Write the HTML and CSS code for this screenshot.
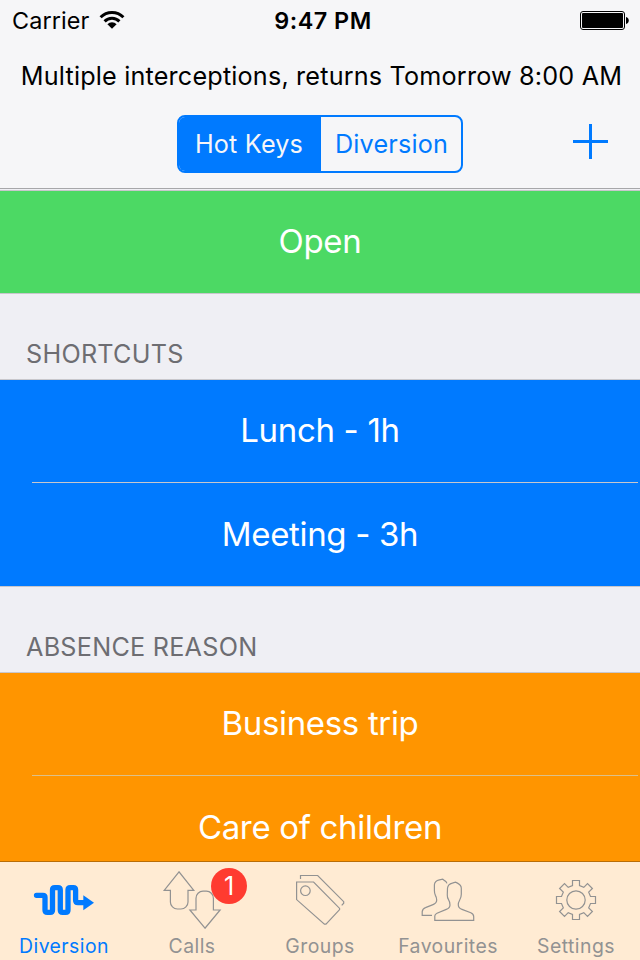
FILE: index.html
```html
<!DOCTYPE html>
<html lang="en">
<head>
    <meta charset="UTF-8">
    <title>Diversion</title>
    <link rel="stylesheet" href="styles.css">
</head>
<body>
    <div class="screen">
        <header class="top">
            <div class="status">
                <div class="status-left">
                    <span class="carrier">Carrier</span>
                    <svg class="wifi" width="26" height="20" viewBox="0 0 26 20">
                        <g fill="none" stroke="#000" stroke-width="3">
                            <path d="M1.6 7.2a16.2 16.2 0 0 1 22.8 0"/>
                            <path d="M5.6 11.4a10.4 10.4 0 0 1 14.8 0"/>
                        </g>
                        <path d="M13 18.8L8.4 14.2a6.4 6.4 0 0 1 9.2 0z"/>
                    </svg>
                </div>
                <span class="time">9:47 PM</span>
                <div class="status-right">
                    <svg width="49" height="19" viewBox="0 0 49 19">
                        <rect x=".5" y=".5" width="44" height="18" rx="2.5" fill="none" stroke="#000"/>
                        <rect x="2" y="2" width="41" height="15" rx="1"/>
                        <path d="M46 6a3.6 3.6 0 0 1 0 7z"/>
                    </svg>
                </div>
            </div>
            <div class="presence">Multiple interceptions, returns Tomorrow 8:00 AM</div>
            <div class="toolbar">
                <div class="segmented">
                    <div class="segment selected">Hot Keys</div>
                    <div class="segment">Diversion</div>
                </div>
                <svg class="add" width="35" height="35" viewBox="0 0 35 35">
                    <path d="M17.5 0v35M0 17.5h35" stroke="#007aff" stroke-width="3"/>
                </svg>
            </div>
        </header>

        <main class="list">
            <div class="group green">
                <div class="row">Open</div>
            </div>
            <h2 class="heading">SHORTCUTS</h2>
            <div class="group blue">
                <div class="row">Lunch - 1h</div>
                <div class="divider"></div>
                <div class="row">Meeting - 3h</div>
            </div>
            <h2 class="heading">ABSENCE REASON</h2>
            <div class="group orange">
                <div class="row">Business trip</div>
                <div class="divider"></div>
                <div class="row">Care of children</div>
            </div>
        </main>

        <nav class="tabs">
            <div class="tab active">
                <svg class="icon" viewBox="0 0 128 70">
                    <path d="M36.5 33.3H43q2 0 2 2V48q0 2.3 2.3 2.3h2.9q2.3 0 2.3-2.3V28q0-2.3 2.3-2.3H58q2.3 0 2.3 2.3v20q0 2.3 2.3 2.3h3.1q2.3 0 2.3-2.3V28q0-2.3 2.3-2.3h3q2.3 0 2.3 2.3v10.3q0 2.3 2.3 2.3H84" fill="none" stroke="currentColor" stroke-width="5.3" stroke-linecap="round"/>
                    <path d="M83.3 33.2L94 40.7l-10.7 7.6z" fill="currentColor"/>
                </svg>
                <span>Diversion</span>
            </div>
            <div class="tab">
                <svg class="icon line" viewBox="0 0 128 70">
                    <path d="M51 9.8L36.2 28.4h6.2V40a7 7 0 0 0 7 7H53a7 7 0 0 0 7-7V28.4h5.8z"/>
                    <path d="M77 66.2L61.9 48H68V36.2a7 7 0 0 1 7-7h3.4a7 7 0 0 1 7 7V48h6.7z"/>
                </svg>
                <span>Calls</span>
                <div class="badge">1</div>
            </div>
            <div class="tab">
                <svg class="icon line" viewBox="0 0 128 70">
                    <path d="M40.6 20h17l26 26.4v1.2L70 62.2h-1.6L40.6 37.6z"/>
                    <circle cx="49.4" cy="28.7" r="4.8"/>
                    <path d="M44.5 17v-3.5h17.2l26 26.2v1.5l-2 2.1"/>
                </svg>
                <span>Groups</span>
            </div>
            <div class="tab">
                <svg class="icon line" viewBox="0 0 128 70">
                    <path d="M50.8 58.4V54q0-1.8 2.2-2.8l9.3-3.8q3.7-1.4 3.7-4.4 0-3-1.5-5.3c-1.5-2.3-1.2-3.8-1.2-5.4l.2-6q.4-4.2 4.8-5.2l3.2-.9 2 .9q3.8 2 3.8 5.2v6c0 3-.7 4.3-1.7 6q-1.4 2.4-1.3 4.7 0 3 3.7 4.4l8.8 3.4q2.9 1.3 2.9 4v3.6z"/>
                    <path d="M48 53.4h-9.8v-3.8q.4-3 3.3-4l7.5-3q3.7-1.4 3.7-4.6 0-2.4-1.3-4.6c-1-1.8-1-3.2-1-4.8v-5.8q.3-4 5-5l3.3-.6 2.3 1.7q1.4.7 1.9 2.5"/>
                </svg>
                <span>Favourites</span>
            </div>
            <div class="tab">
                <svg class="icon line" viewBox="0 0 128 70">
                    <g transform="translate(64 38)">
                        <path d="M-3.5-19.5h7v5l4.3 1.8 3.7-3.7 4.9 4.9-3.7 3.7 1.8 4.3h5v7h-5l-1.8 4.3 3.7 3.7-4.9 4.9-3.7-3.7-4.3 1.8v5h-7v-5l-4.3-1.8-3.7 3.7-4.9-4.9 3.7-3.7-1.8-4.3h-5v-7h5l1.8-4.3-3.7-3.7 4.9-4.9 3.7 3.7 4.3-1.8z"/>
                        <circle r="9.2"/>
                    </g>
                </svg>
                <span>Settings</span>
            </div>
        </nav>
    </div>
</body>
</html>
```

FILE: styles.css
```css
* {
    box-sizing: border-box;
}
body {
    margin: 0;
    font-family: Inter, "Liberation Sans", sans-serif;
    color: #000;
}
.screen {
    display: flex;
    flex-direction: column;
    width: 640px;
    height: 960px;
    overflow: hidden;
    background-color: #efeff4;
}

/* top bar */
.top {
    flex: none;
    height: 189px;
    background-color: #f6f6f8;
    border-bottom: 1px solid #a7a7aa;
}
.status {
    display: grid;
    grid-template-columns: 1fr auto 1fr;
    align-items: center;
    height: 40px;
    padding: 0 11px 0 12px;
    font-size: 23.4px;
}
.status-left {
    display: flex;
    align-items: center;
    gap: 10px;
}
.carrier {
    letter-spacing: .1px;
}
.status-right {
    display: flex;
    justify-content: flex-end;
}
.time {
    padding-left: 5px;
    font-weight: 600;
    letter-spacing: .5px;
}
.presence {
    height: 72px;
    padding-left: 3px;
    line-height: 73px;
    font-size: 25.2px;
    letter-spacing: .18px;
    text-align: center;
    white-space: nowrap;
}
.toolbar {
    display: grid;
    grid-template-columns: 1fr 286px 1fr;
    align-items: center;
    padding: 3px 32px 0;
}
.segmented {
    display: flex;
    height: 58px;
    border: 2px solid #007aff;
    border-radius: 8px;
    overflow: hidden;
    grid-column: 2;
}
.segment {
    flex: 1;
    padding-left: 1px;
    line-height: 55px;
    text-align: center;
    font-size: 25.2px;
    letter-spacing: .18px;
    color: #007aff;
}
.selected {
    flex: none;
    width: 142px;
    padding: 0 2px 0 0;
    background-color: #007aff;
    color: #f6f6f8;
}
.add {
    justify-self: end;
    margin-bottom: 5px;
}

/* list */
.list {
    flex: 1;
    min-height: 0;
    padding-top: 1px;
    overflow: hidden;
}
.group {
    border-top: 1px solid #c8c7cc;
    border-bottom: 1px solid #c8c7cc;
    color: #fff;
}
.row {
    height: 102px;
    line-height: 101px;
    text-align: center;
    font-size: 33px;
    letter-spacing: -.33px;
}
.divider + .row {
    height: 103px;
    line-height: 103px;
}
.divider {
    height: 1px;
    margin: 0 2px 0 32px;
    background-color: #c8c7cc;
}
.green {
    background-color: #4cd964;
}
.blue {
    background-color: #007aff;
}
.orange {
    background-color: #ff9500;
}
.orange .divider {
    background-color: #dcc08a;
}
.heading {
    height: 85px;
    margin: 0;
    padding: 44px 0 0 26px;
    line-height: 32px;
    font-size: 25.2px;
    font-weight: 400;
    letter-spacing: .25px;
    color: #6d6d72;
}

/* tab bar */
.tabs {
    flex: none;
    display: flex;
    height: 99px;
    border-top: 1px solid #b96d06;
    background-color: #ffebd3;
}
.tab {
    position: relative;
    flex: 1;
    display: flex;
    flex-direction: column;
    align-items: center;
    font-size: 19.4px;
    line-height: 28px;
    letter-spacing: .45px;
    color: #929292;
}
.active {
    color: #007aff;
}
.icon {
    width: 128px;
    height: 70px;
}
.line {
    fill: none;
    stroke: #929292;
    stroke-width: 1.2;
}
.badge {
    position: absolute;
    left: 83px;
    top: 6px;
    width: 36px;
    height: 36px;
    border-radius: 18px;
    background-color: #ff3b30;
    color: #fff;
    font-size: 25.2px;
    line-height: 36px;
    letter-spacing: 0;
    text-align: center;
}
```
